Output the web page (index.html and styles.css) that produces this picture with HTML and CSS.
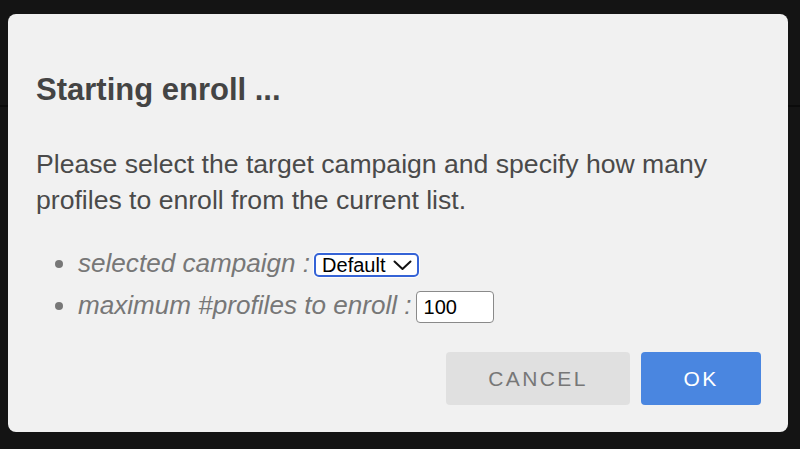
FILE: index.html
```html
<!DOCTYPE html>
<html lang="en">
<head>
<meta charset="utf-8">
<title>Starting enroll</title>
<link rel="stylesheet" href="styles.css">
</head>
<body>
<div class="backdrop">
  <div class="dialog" role="dialog">
    <h2 class="title">Starting enroll ...</h2>
    <p class="message">Please select the target campaign and specify how many profiles to enroll from the current list.</p>
    <ul class="fields">
      <li class="field">selected campaign :<span class="select"><select class="select-input"><option>Default</option></select><svg class="chevron" width="19" height="11" viewBox="0 0 19 11"><path d="M1.5 1.5 L9.5 9 L17.5 1.5" fill="none" stroke="#111" stroke-width="2" stroke-linecap="round" stroke-linejoin="round"/></svg></span></li>
      <li class="field">maximum #profiles to enroll :<input class="number" type="text" value="100"></li>
    </ul>
    <div class="actions">
      <button class="btn btn-cancel">CANCEL</button>
      <button class="btn btn-ok">OK</button>
    </div>
  </div>
</div>
</body>
</html>
```
FILE: styles.css
```css
html, body {
  margin: 0;
  padding: 0;
  background: #141414;
  font-family: "Liberation Sans", Arial, Helvetica, sans-serif;
}

.backdrop {
  width: 800px;
  height: 449px;
  padding: 14px 0 0 8px;
  box-sizing: border-box;
  background: linear-gradient(#141414 0, #141414 105px, #0b0b0b 105px, #0b0b0b 107px, #141414 107px);
}

.dialog {
  width: 780px;
  height: 418px;
  box-sizing: border-box;
  background: #f1f1f1;
  border-radius: 8px;
  padding: 58px 27px 27px 28px;
  display: flex;
  flex-direction: column;
}

.title {
  margin: 0;
  font-size: 31px;
  line-height: 36px;
  font-weight: bold;
  color: #444444;
}

.message {
  margin: 38px 0 0 0;
  font-size: 26.6px;
  line-height: 36px;
  color: #4a4a4a;
}

.fields {
  margin: 24px 0 0 0;
  padding: 0 0 0 42px;
  color: #777777;
  font-size: 26.1px;
  font-style: italic;
  line-height: 42px;
}

.field {
  height: 42px;
}

.select {
  display: inline-flex;
  align-items: center;
  vertical-align: middle;
  height: 24px;
  box-sizing: border-box;
  margin-left: 4px;
  border: 2px solid #3563d6;
  border-radius: 5px;
  background: #ffffff;
  padding: 0 5px 0 6px;
  gap: 7px;
  box-shadow: 0 0 0 1px rgba(255, 255, 255, 0.8);
}

.select-input {
  appearance: none;
  -webkit-appearance: none;
  border: none;
  background: transparent;
  padding: 0;
  margin: 0;
  font-family: "Liberation Sans", Arial, sans-serif;
  font-size: 20px;
  font-style: normal;
  color: #000000;
  line-height: 20px;
  outline: none;
}

.chevron {
  display: block;
}

.number {
  vertical-align: middle;
  width: 78px;
  height: 32px;
  box-sizing: border-box;
  margin-left: 4px;
  border: 1px solid #8a8a8a;
  border-radius: 4px;
  background: #ffffff;
  padding: 0 0 0 7px;
  font-family: "Liberation Sans", Arial, sans-serif;
  font-size: 20px;
  font-style: normal;
  color: #000000;
}

.actions {
  margin-top: auto;
  display: flex;
  justify-content: flex-end;
  gap: 11px;
}

.btn {
  height: 53px;
  border: none;
  border-radius: 4px;
  font-family: "Liberation Sans", Arial, sans-serif;
  font-size: 21px;
  letter-spacing: 2.4px;
  padding: 0;
  cursor: pointer;
}

.btn-cancel {
  width: 184px;
  background: #e0e0e0;
  color: #777777;
}

.btn-ok {
  width: 120px;
  background: #4a86e0;
  color: #ffffff;
}
```
